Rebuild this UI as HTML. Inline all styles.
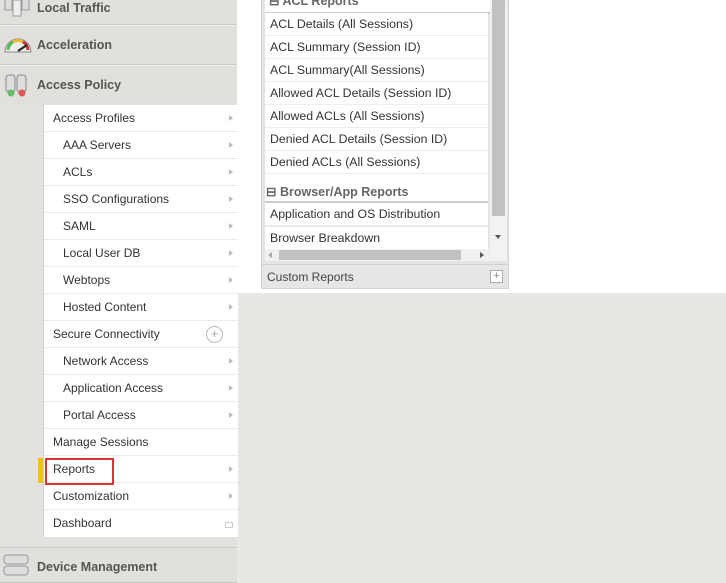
<!DOCTYPE html><html><head><style>
body{margin:0;width:726px;height:583px;overflow:hidden;background:#e8e7e4;font-family:"Liberation Sans",sans-serif;position:relative}
.a{position:absolute}
.sb{left:0;top:0;width:237px;height:583px;background:#e3e2df}
.hd{left:0;width:237px;background:#e1e0dc;border-bottom:1px solid #c9c8c4;border-top:1px solid #f3f3f1;font-weight:bold;font-size:12.5px;color:#555;box-sizing:border-box}
.hd span{position:absolute;left:37px}
.sub{left:43px;top:105px;width:194px;height:432px;background:#fff;border-left:1px solid #d0d0d0}
.r{position:absolute;left:0;width:194px;height:27px;border-bottom:1px solid #ececec;font-size:12px;color:#333;box-sizing:border-box;line-height:26px}
.r .ar{position:absolute;right:5px;top:10px;border-left:4px solid #bbb;border-top:3.5px solid transparent;border-bottom:3.5px solid transparent}
.li{position:absolute;left:265px;width:223px;height:23px;border-bottom:1px solid #eee;background:#fff;font-size:12.3px;color:#333;line-height:22px;padding-left:5px;box-sizing:border-box}
</style></head><body>
<div class="a" style="left:237px;top:0;width:489px;height:293px;background:#fff"></div>
<div class="a sb"></div>
<div class="a hd" style="top:-6px;height:31px"><span style="top:6px">Local Traffic</span>
<svg class="a" style="left:4px;top:2px" width="26" height="20"><rect x="1" y="0" width="7" height="13" fill="#ddd" stroke="#999"/><rect x="9" y="3" width="8" height="16" fill="#eee" stroke="#999"/><rect x="18" y="0" width="7" height="13" fill="#ddd" stroke="#999"/></svg></div>
<div class="a hd" style="top:25px;height:40px"><span style="top:12px">Acceleration</span>
<svg class="a" style="left:3px;top:9px" width="30" height="20"><path d="M2 17 A13 13 0 0 1 28 17 Z" fill="#eee" stroke="#888"/><path d="M5 15 A10 10 0 0 1 10 7" stroke="#5b5" stroke-width="3" fill="none"/><path d="M10 7 A10 10 0 0 1 20 7" stroke="#eb3" stroke-width="3" fill="none"/><path d="M20 7 A10 10 0 0 1 25 15" stroke="#c33" stroke-width="3" fill="none"/><path d="M15 16 L24 10" stroke="#222" stroke-width="2"/></svg></div>
<div class="a hd" style="top:65px;height:40px;border-bottom:none"><span style="top:12px">Access Policy</span>
<svg class="a" style="left:5px;top:8px" width="24" height="24"><rect x="1" y="1" width="9" height="17" rx="3" fill="#ddd" stroke="#888"/><rect x="12" y="1" width="9" height="17" rx="3" fill="#ddd" stroke="#888"/><circle cx="6" cy="19" r="3.5" fill="#6b6"/><circle cx="17" cy="19" r="3.5" fill="#d55"/></svg></div>
<div class="a sub">
<div class="r" style="top:0;padding-left:9px">Access Profiles<i class="ar"></i></div>
<div class="r" style="top:27px;padding-left:19px">AAA Servers<i class="ar"></i></div>
<div class="r" style="top:54px;padding-left:19px">ACLs<i class="ar"></i></div>
<div class="r" style="top:81px;padding-left:19px">SSO Configurations<i class="ar"></i></div>
<div class="r" style="top:108px;padding-left:19px">SAML<i class="ar"></i></div>
<div class="r" style="top:135px;padding-left:19px">Local User DB<i class="ar"></i></div>
<div class="r" style="top:162px;padding-left:19px">Webtops<i class="ar"></i></div>
<div class="r" style="top:189px;padding-left:19px">Hosted Content<i class="ar"></i></div>
<div class="r" style="top:216px;padding-left:9px">Secure Connectivity<span class="a" style="right:15px;top:5px;width:15px;height:15px;border:1px solid #bbb;border-radius:50%;line-height:14px;text-align:center;color:#aaa;font-size:13px">+</span></div>
<div class="r" style="top:243px;padding-left:19px">Network Access<i class="ar"></i></div>
<div class="r" style="top:270px;padding-left:19px">Application Access<i class="ar"></i></div>
<div class="r" style="top:297px;padding-left:19px">Portal Access<i class="ar"></i></div>
<div class="r" style="top:324px;padding-left:9px">Manage Sessions</div>
<div class="r" style="top:351px;padding-left:9px">Reports<i class="ar"></i></div>
<div class="r" style="top:378px;padding-left:9px">Customization<i class="ar"></i></div>
<div class="r" style="top:405px;padding-left:9px;border:none">Dashboard<span class="a" style="right:5px;top:12px;width:6px;height:4px;border:1px solid #ccc"></span></div>
</div>
<div class="a" style="left:38px;top:458px;width:5px;height:25px;background:#f5c400"></div>
<div class="a" style="left:45px;top:458px;width:65px;height:23px;border:2px solid #d33"></div>
<div class="a hd" style="top:547px;height:36px;border-top:1px solid #c9c8c4"><span style="top:12px">Device Management</span>
<svg class="a" style="left:3px;top:5px" width="26" height="26"><rect x="1" y="2" width="24" height="9" rx="3" fill="#ddd" stroke="#999"/><rect x="1" y="13" width="24" height="9" rx="3" fill="#ddd" stroke="#999"/></svg></div>

<div class="a" style="left:261px;top:0;width:248px;height:289px;background:#e4e4e4;border:1px solid #d6d6d6;box-sizing:border-box"></div>
<div class="a" style="left:265px;top:-3px;width:223px;height:15px;border-bottom:2px solid #ccc;font-weight:bold;font-size:12.5px;color:#666;background:#fff;padding-left:4px;line-height:8px">⊟ ACL Reports</div>
<div class="li" style="top:13px">ACL Details (All Sessions)</div>
<div class="li" style="top:36px">ACL Summary (Session ID)</div>
<div class="li" style="top:59px">ACL Summary(All Sessions)</div>
<div class="li" style="top:82px">Allowed ACL Details (Session ID)</div>
<div class="li" style="top:105px">Allowed ACLs (All Sessions)</div>
<div class="li" style="top:128px">Denied ACL Details (Session ID)</div>
<div class="li" style="top:151px">Denied ACLs (All Sessions)</div>
<div class="a" style="left:265px;top:174px;width:223px;height:29px;border-bottom:2px solid #ccc;background:#fff;font-weight:bold;font-size:12.5px;color:#666;padding-left:1px;box-sizing:border-box"><span style="position:absolute;top:10px;left:1px">⊟ Browser/App Reports</span></div>
<div class="li" style="top:203px">Application and OS Distribution</div>
<div class="li" style="top:227px">Browser Breakdown</div>
<div class="a" style="left:490px;top:0;width:17px;height:261px;background:#f2f2f2"></div>
<div class="a" style="left:492px;top:0;width:13px;height:216px;background:#c1c1c1"></div>
<div class="a" style="left:495px;top:235px;border-top:4px solid #555;border-left:3.5px solid transparent;border-right:3.5px solid transparent"></div>
<div class="a" style="left:265px;top:249px;width:225px;height:12px;background:#f0f0f0"></div>
<div class="a" style="left:279px;top:250px;width:182px;height:10px;background:#c1c1c1"></div>
<div class="a" style="left:268px;top:252px;border-right:4px solid #aaa;border-top:3.5px solid transparent;border-bottom:3.5px solid transparent"></div>
<div class="a" style="left:480px;top:252px;border-left:4px solid #555;border-top:3.5px solid transparent;border-bottom:3.5px solid transparent"></div>
<div class="a" style="left:262px;top:264px;width:246px;height:24px;background:#e6e6e6;border-top:1px solid #d0d0d0;font-size:12px;color:#444;line-height:24px;padding-left:5px;box-sizing:border-box">Custom Reports<span class="a" style="right:5px;top:5px;width:11px;height:11px;border:1px solid #aaa;background:#fff;line-height:10px;text-align:center;color:#888;font-size:11px">+</span></div>
</body></html>
